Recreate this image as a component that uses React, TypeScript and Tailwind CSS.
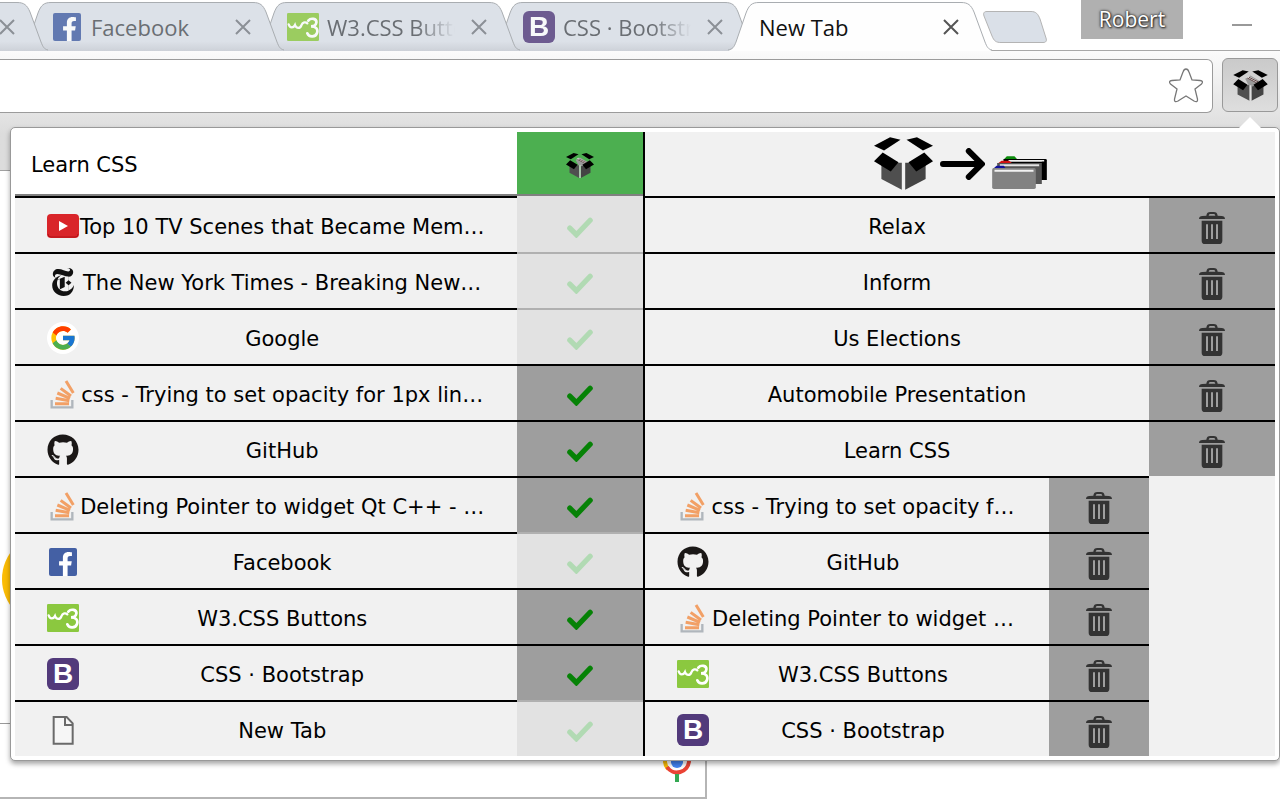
import React from "react";
import { FaFacebookF, FaGithub } from "react-icons/fa";
import { FcGoogle } from "react-icons/fc";
import { SiNewyorktimes } from "react-icons/si";

type Site =
  | "youtube"
  | "nyt"
  | "google"
  | "stack"
  | "github"
  | "facebook"
  | "w3"
  | "bootstrap"
  | "page";

function BoxIcon({ papers = false, className }: { papers?: boolean; className: string }) {
  return (
    <svg viewBox="40 38 176 158" className={className} aria-hidden="true">
      <path d="M62 115L123 115V195L62 163Z" fill="#4f4f4f" />
      <path d="M194 115L133 115V195L194 163Z" fill="#444" />
      {papers && (
        <g>
          <path d="M101 82L128 66L178 96L140 122L118 116Z" fill="#9a9a9a" />
          <path d="M106 76L118 68L170 96L158 104Z" fill="#ddd" />
          <path d="M112 79L160 104M120 75L166 98" stroke="#5c4040" strokeWidth="5" />
          <path d="M124 116H132V195H124Z" fill="#ddd" />
        </g>
      )}
      <path d="M88 39L119 46L70 78L40 64Z" />
      <path d="M168 39L137 46L186 78L216 64Z" />
      <path d="M66 84L113 113L90 141L40 110Z" />
      <path d="M190 84L143 113L166 141L216 110Z" />
    </svg>
  );
}

function ArrowIcon() {
  return (
    <svg viewBox="234 69 136 96" className="h-8 w-[45px]" aria-hidden="true">
      <path
        d="M243 117H356M321 78L360 117L321 156"
        fill="none"
        stroke="#000"
        strokeWidth="18"
        strokeLinecap="round"
        strokeLinejoin="miter"
      />
    </svg>
  );
}

function FoldersIcon() {
  return (
    <svg viewBox="397 96 164 99" className="h-[33px] w-[55px]" aria-hidden="true">
      <path d="M431 107L441 97H464L472 106Z" fill="#0a8a0a" />
      <path d="M431 105H557Q561 105 561 109V168H431Z" fill="#000" />
      <path d="M446 108H553V113H446Z" fill="#f1f1f1" />
      <path d="M546 113H553V121H546Z" fill="#000" />
      <path d="M412 120L425 110H448L457 118Z" fill="#d01010" />
      <path d="M412 117H546V180H412Z" fill="#555" />
      <path d="M420 121H538V127H420Z" fill="#e4e4e4" />
      <path d="M400 134L410 125H432L438 134Z" fill="#10109a" />
      <rect x="397" y="132" width="131" height="63" rx="5" fill="#828282" />
      <path d="M404 137H521V143H404Z" fill="#f1f1f1" />
    </svg>
  );
}

function TrashIcon() {
  return (
    <svg viewBox="0 0 78 96" className="h-8 w-[26px]" fill="#333" aria-hidden="true">
      <path
        fillRule="evenodd"
        d="M0 21C0 15 4 13 10 12L22 11C23 3 27 0 34 0H44C51 0 55 3 56 11L68 12C74 13 78 15 78 21ZM29 11H49C48 8 47 6 44 6H34C31 6 30 8 29 11Z"
      />
      <path
        fillRule="evenodd"
        d="M8 26H70V86Q70 96 60 96H18Q8 96 8 86ZM21 37V81H27V37ZM36 37V81H42V37ZM51 37V81H57V37Z"
      />
    </svg>
  );
}

function CheckIcon({ on }: { on: boolean }) {
  return (
    <svg viewBox="0 0 78 64" className="mt-[5px] h-[21px] w-[26px]" aria-hidden="true">
      <path
        d="M8 34L28 54L70 10"
        fill="none"
        stroke={on ? "#068206" : "#b1dab3"}
        strokeWidth="16"
        strokeLinecap="round"
        strokeLinejoin="miter"
      />
    </svg>
  );
}

function Favicon({ site }: { site: Site }) {
  switch (site) {
    case "youtube":
      return (
        <svg viewBox="0 0 32 32" className="size-8">
          <rect y="4" width="32" height="24" rx="4" fill="#d9252a" />
          <path d="M1 24Q1 27 4 27H28Q31 27 31 24" fill="none" stroke="#b31217" />
          <path d="M12 11L21 16L12 21Z" fill="#fff" />
        </svg>
      );
    case "nyt":
      return <SiNewyorktimes className="h-7 w-8 text-[#111]" />;
    case "google":
      return (
        <span className="flex size-8 items-center justify-center rounded-full bg-white">
          <FcGoogle className="size-7" />
        </span>
      );
    case "stack":
      return (
        <svg viewBox="0 0 96 96" className="size-8" fill="none">
          <path d="M14 66V88H76V66" stroke="#b0b6bc" strokeWidth="7" />
          <path
            d="M24 77H66M26 61L67 68M31 45L69 61M41 31L72 54M57 9L79 45"
            stroke="#f2a066"
            strokeWidth="9"
          />
        </svg>
      );
    case "github":
      return <FaGithub className="size-8 text-[#1b1817]" />;
    case "facebook":
      return (
        <span className="mx-[2px] flex size-7 items-end justify-end overflow-hidden rounded-[2px] bg-[#4460a4] pr-1">
          <FaFacebookF className="h-6 w-[15px] text-white" />
        </span>
      );
    case "w3":
      return (
        <svg viewBox="0 0 96 84" className="h-7 w-8" fill="none" stroke="#fff" strokeLinecap="round">
          <rect width="96" height="84" rx="4" fill="#8bc83f" stroke="none" />
          <path d="M5 34C9 46 19 46 24 36C28 48 40 47 43 37C47 27 56 26 61 31" strokeWidth="7" />
          <path
            d="M64 23C72 13 90 17 88 29C87 37 79 40 72 40C86 40 94 48 90 60C86 73 66 74 61 61"
            strokeWidth="8"
          />
        </svg>
      );
    case "bootstrap":
      return (
        <span className="flex size-8 items-center justify-center rounded-md bg-[#523a7b] text-[28px] leading-8 font-bold text-white [font-family:'Liberation_Sans',sans-serif]">
          B
        </span>
      );
    case "page":
      return (
        <svg viewBox="0 0 96 96" className="size-8" fill="none" stroke="#6a6a6a" strokeWidth="6">
          <path d="M20 9H59L77 28V89H20Z" fill="#f6f6f6" />
          <path d="M54 10V33H76" />
        </svg>
      );
  }
}

const browserTabs: { title: string; site?: Site; fade?: boolean; stack: string }[] = [
  { title: "", stack: "z-40" },
  { title: "Facebook", site: "facebook", stack: "z-30" },
  { title: "W3.CSS Buttons", site: "w3", fade: true, stack: "z-20" },
  { title: "CSS · Bootstrap", site: "bootstrap", fade: true, stack: "z-10" },
  { title: "New Tab", stack: "z-50" },
];

function CloseIcon({ active }: { active: boolean }) {
  return (
    <svg viewBox="0 0 16 16" className="size-4" aria-hidden="true">
      <path d="M1 1L15 15M15 1L1 15" stroke={active ? "#555" : "#8b9096"} strokeWidth="2" />
    </svg>
  );
}

function BrowserTab({ title, site, fade, stack, active }: { title: string; site?: Site; fade?: boolean; stack: string; active: boolean }) {
  return (
    <div className={`relative -mr-[28px] flex h-[51px] w-[264px] shrink-0 items-center pt-[3px] pr-[33px] pl-[31px] ${stack}`}>
      <svg viewBox="0 0 264 51" className="absolute inset-0 -z-10 h-full w-full" aria-hidden="true">
        <defs>
          <linearGradient id="tabShade" x1="0" y1="0" x2="0" y2="1">
            <stop offset="0.8" stopColor="#dce1e8" />
            <stop offset="1" stopColor="#cdd1d8" />
          </linearGradient>
        </defs>
        <path
          d="M0 51C5 49 6 47 8 42L18 13C21 5 24 2.500 31 2.500H233C240 2.500 243 5 246 12L257 42C259 47 260 49 264 51Z"
          fill={active ? "#fefefe" : "url(#tabShade)"}
        />
        <path
          d="M0 50C5 49 6 47 8 42L18 13C21 5 24 2.500 31 2.500H233C240 2.500 243 5 246 12L257 42C259 47 260 49 264 50"
          fill="none"
          stroke="#a9adb1"
        />
      </svg>
      {site && (
        <span className="mr-2 shrink-0 opacity-80">
          <Favicon site={site} />
        </span>
      )}
      <span
        className={`flex-1 overflow-hidden text-[22px] leading-8 whitespace-nowrap [font-family:'Open_Sans',sans-serif] ${
          active ? "text-[#111]" : "text-[#6a6e73]"
        } ${fade ? "[mask-image:linear-gradient(to_right,#000_70%,transparent)]" : ""}`}
      >
        {title}
      </span>
      <button type="button" aria-label="Close tab" className="ml-4 shrink-0">
        <CloseIcon active={active} />
      </button>
    </div>
  );
}

const openTabs: { title: string; site: Site; on: boolean }[] = [
  { title: "Top 10 TV Scenes that Became Mem…", site: "youtube", on: false },
  { title: "The New York Times - Breaking New…", site: "nyt", on: false },
  { title: "Google", site: "google", on: false },
  { title: "css - Trying to set opacity for 1px lin…", site: "stack", on: true },
  { title: "GitHub", site: "github", on: true },
  { title: "Deleting Pointer to widget Qt C++ - …", site: "stack", on: true },
  { title: "Facebook", site: "facebook", on: false },
  { title: "W3.CSS Buttons", site: "w3", on: true },
  { title: "CSS · Bootstrap", site: "bootstrap", on: true },
  { title: "New Tab", site: "page", on: false },
];

const groups = ["Relax", "Inform", "Us Elections", "Automobile Presentation", "Learn CSS"];

const groupTabs: { title: string; site: Site }[] = [
  { title: "css - Trying to set opacity f…", site: "stack" },
  { title: "GitHub", site: "github" },
  { title: "Deleting Pointer to widget …", site: "stack" },
  { title: "W3.CSS Buttons", site: "w3" },
  { title: "CSS · Bootstrap", site: "bootstrap" },
];

function SiteTitle({ title, site }: { title: string; site: Site }) {
  return (
    <button
      type="button"
      className="flex min-w-0 flex-1 items-center border-t-2 border-black px-8 pt-[2px] whitespace-nowrap"
    >
      <span className="w-8 shrink-0">
        <Favicon site={site} />
      </span>
      <span className="flex min-w-0 flex-1 justify-center pt-[2px]">{title}</span>
    </button>
  );
}

function TrashButton({ label, width }: { label: string; width: string }) {
  return (
    <button
      type="button"
      aria-label={`Delete ${label}`}
      className={`flex shrink-0 items-center justify-center border-t-2 border-black bg-[#9e9e9e] pt-[6px] ${width}`}
    >
      <TrashIcon />
    </button>
  );
}

function Popup() {
  return (
    <section className="absolute top-[127px] right-0 left-[10px] z-50 flex rounded-[5px] border border-[#999] bg-white p-1 text-[21px] leading-8 text-black shadow-[0_3px_5px_rgba(0,0,0,0.35)] [font-family:'DejaVu_Sans',sans-serif]">
      <div className="w-1/2 border-r-2 border-black bg-[#f1f1f1]">
        <form className="flex h-16">
          <input
            aria-label="Group name"
            defaultValue="Learn CSS"
            className="w-4/5 border-b-2 border-[#808080] bg-white px-4 pt-[3px] outline-none"
          />
          <button
            type="button"
            aria-label="Store tabs"
            className="flex w-1/5 items-center justify-center border-b-2 border-[#808080] bg-[#4caf50] pt-1"
          >
            <BoxIcon papers className="h-[27px] w-7" />
          </button>
        </form>
        <ul>
          {openTabs.map((tab, i) => (
            <li key={i} className="flex h-14">
              <SiteTitle title={tab.title} site={tab.site} />
              <button
                type="button"
                aria-label={`Select ${tab.title}`}
                aria-pressed={tab.on}
                className={`flex w-1/5 items-center justify-center border-t-2 ${
                  tab.on ? "border-black bg-[#9e9e9e]" : i === 0 ? "border-[#e2e2e2] bg-[#e2e2e2]" : "border-[#b0b0b0] bg-[#e2e2e2]"
                }`}
              >
                <CheckIcon on={tab.on} />
              </button>
            </li>
          ))}
        </ul>
      </div>
      <div className="w-1/2 bg-[#f1f1f1]">
        <div className="flex h-16 items-center justify-center gap-[7px] pb-px">
          <BoxIcon className="h-[53px] w-[59px]" />
          <ArrowIcon />
          <span className="pt-[18px]">
            <FoldersIcon />
          </span>
        </div>
        <ul>
          {groups.map((name) => (
            <li key={name} className="flex h-14">
              <button type="button" className="flex-1 border-t-2 border-black pt-1">
                {name}
              </button>
              <TrashButton label={name} width="w-1/5" />
            </li>
          ))}
        </ul>
        <ul className="w-4/5">
          {groupTabs.map((tab, i) => (
            <li key={i} className="flex h-14">
              <SiteTitle title={tab.title} site={tab.site} />
              <TrashButton label={tab.title} width="w-[100px]" />
            </li>
          ))}
        </ul>
      </div>
    </section>
  );
}

export default function App() {
  return (
    <div className="relative min-h-screen overflow-hidden bg-white">
      <header>
        <div className="relative z-10 flex h-[51px] border-b border-[#a8a8a8]">
          <nav className="-ml-[216px] flex shrink-0">
            {browserTabs.map((tab, i) => (
              <BrowserTab key={i} {...tab} active={i === browserTabs.length - 1} />
            ))}
          </nav>
          <button type="button" aria-label="Open new tab" className="mt-[11px] ml-[19px] h-8 shrink-0">
            <svg viewBox="0 0 64 32" className="h-8 w-16">
              <path
                d="M4 .5H48C53 .5 55 3 57 8L63 27C64 30 63 31.500 60 31.500H18C13 31.500 11 30 9 25L1 5C0 2 1 .5 4 .5Z"
                fill="#dae0e8"
                stroke="#b4b4b4"
              />
            </svg>
          </button>
          <div className="mr-7 ml-auto flex items-start gap-[49px]">
            <button
              type="button"
              className="h-[39px] w-[102px] bg-[#b0b0b0] text-[21px] leading-[39px] text-white [font-family:'Open_Sans',sans-serif] [text-shadow:0_0_2px_#333,0_0_3px_#333,1px_1px_2px_#333]"
            >
              Robert
            </button>
            <button type="button" aria-label="Minimize" className="mt-6 h-[2px] w-5 bg-[#999]" />
          </div>
        </div>
        <div className="flex h-[120px] items-start gap-[9px] border-b border-[#a0a0a0] bg-linear-to-b from-[#fbfbfb] to-[#dcdcdc] to-70% pt-[7px] pr-[2px]">
          <div className="mt-px flex h-[54px] flex-1 items-center justify-end rounded-r-md border border-l-0 border-[#9b9b9b] bg-white pr-2">
            <input aria-label="Address" className="h-full flex-1 outline-none" />
            <button type="button" aria-label="Bookmark this page">
              <svg viewBox="0 0 36 36" className="size-9">
                <path
                  d="M18 1Q20 1 21 4L24 12L32 12.500Q36 13 33.500 16L27 21L29.500 31Q30 35 26 33L18 28L10 33Q6 35 6.500 31L9 21L2.500 16Q0 13 4 12.500L12 12L15 4Q16 1 18 1Z"
                  fill="#fff"
                  stroke="#777"
                  strokeWidth="1.300"
                />
              </svg>
            </button>
          </div>
          <button
            type="button"
            aria-label="Tab box"
            className="relative flex h-[54px] w-14 items-center justify-center rounded-md border border-[#999] bg-linear-to-b from-[#cacaca] to-[#dedede]"
          >
            <BoxIcon papers className="h-[31px] w-[35px]" />
            <svg viewBox="0 0 24 13" className="absolute top-[58px] left-[15px] z-[60] h-[13px] w-6" aria-hidden="true">
              <path d="M0 12L12 0L24 12V13H0Z" fill="#fff" />
            </svg>
          </button>
        </div>
      </header>
      <main>
        <div className="mt-[362px] ml-[2px] size-[92px] rounded-full bg-[#fbbc05]" />
        <div className="mt-[98px] flex h-[76px] w-[707px] justify-end border-2 border-t border-l-0 border-[#b5b5b5] border-t-[#999] pr-[13px]">
          <svg viewBox="0 0 30 60" className="h-[60px] w-[30px]" fill="none" aria-hidden="true">
            <rect x="9" y="18" width="12" height="26" rx="6" fill="#4285f4" />
            <path d="M3 37A12 12 0 0 0 6 45" stroke="#fbbc05" strokeWidth="4" />
            <path d="M5 43A12 12 0 0 0 27 37" stroke="#ea4335" strokeWidth="4" />
            <path d="M15 50V58" stroke="#34a853" strokeWidth="4" />
          </svg>
        </div>
      </main>
      <Popup />
    </div>
  );
}
